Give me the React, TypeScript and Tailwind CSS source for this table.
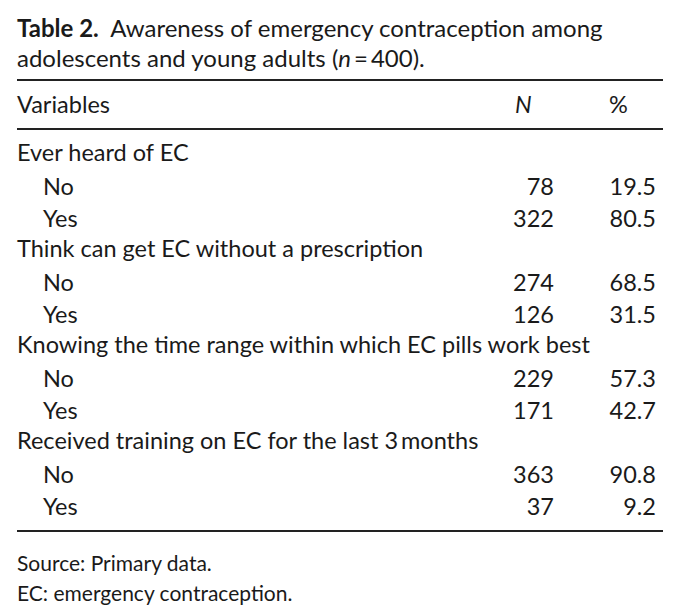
const sections = [
  { label: "Ever heard of EC", rows: [["No", "78", "19.5"], ["Yes", "322", "80.5"]] },
  { label: "Think can get EC without a prescription", rows: [["No", "274", "68.5"], ["Yes", "126", "31.5"]] },
  { label: "Knowing the time range within which EC pills work best", rows: [["No", "229", "57.3"], ["Yes", "171", "42.7"]] },
  { label: "Received training on EC for the last 3\u2009months", rows: [["No", "363", "90.8"], ["Yes", "37", "9.2"]] },
]

export default function App() {
  return (
    <div className="w-[680px] h-[614px] bg-white text-[#1a1a1a] font-['Lato',sans-serif] px-[17px] pt-[13px]">
      <p className="text-[24px] leading-[30px] w-[646px]">
        <span className="font-bold">Table 2.</span>&nbsp; Awareness of emergency contraception among adolescents and young adults (<i>n</i>{"\u2009=\u2009"}400).
      </p>
      <div className="mt-[6px] w-[646px] border-t-2 border-b-2 border-[#222]">
        <div className="grid grid-cols-[1fr_80px_102px] pr-[7px] h-[49px] items-center text-[23.5px] border-b-2 border-[#222]">
          <span>Variables</span>
          <span className="pl-[41px] italic">N</span>
          <span className="pl-[55px]">%</span>
        </div>
        <div className="pt-[7px] pb-[9px]">
          {sections.map((s) => (
            <div key={s.label}>
              <div className="h-[32px] flex items-center text-[23.5px]">{s.label}</div>
              {s.rows.map((r) => (
                <div key={r[0]} className="grid grid-cols-[1fr_80px_102px] pr-[7px] h-[32px] items-center text-[23.5px]">
                  <span className="pl-[26px]">{r[0]}</span>
                  <span className="text-right">{r[1]}</span>
                  <span className="text-right">{r[2]}</span>
                </div>
              ))}
            </div>
          ))}
        </div>
      </div>
      <div className="mt-[16px] text-[21px] leading-[30px]">
        <p>Source: Primary data.</p>
        <p>EC: emergency contraception.</p>
      </div>
    </div>
  )
}
